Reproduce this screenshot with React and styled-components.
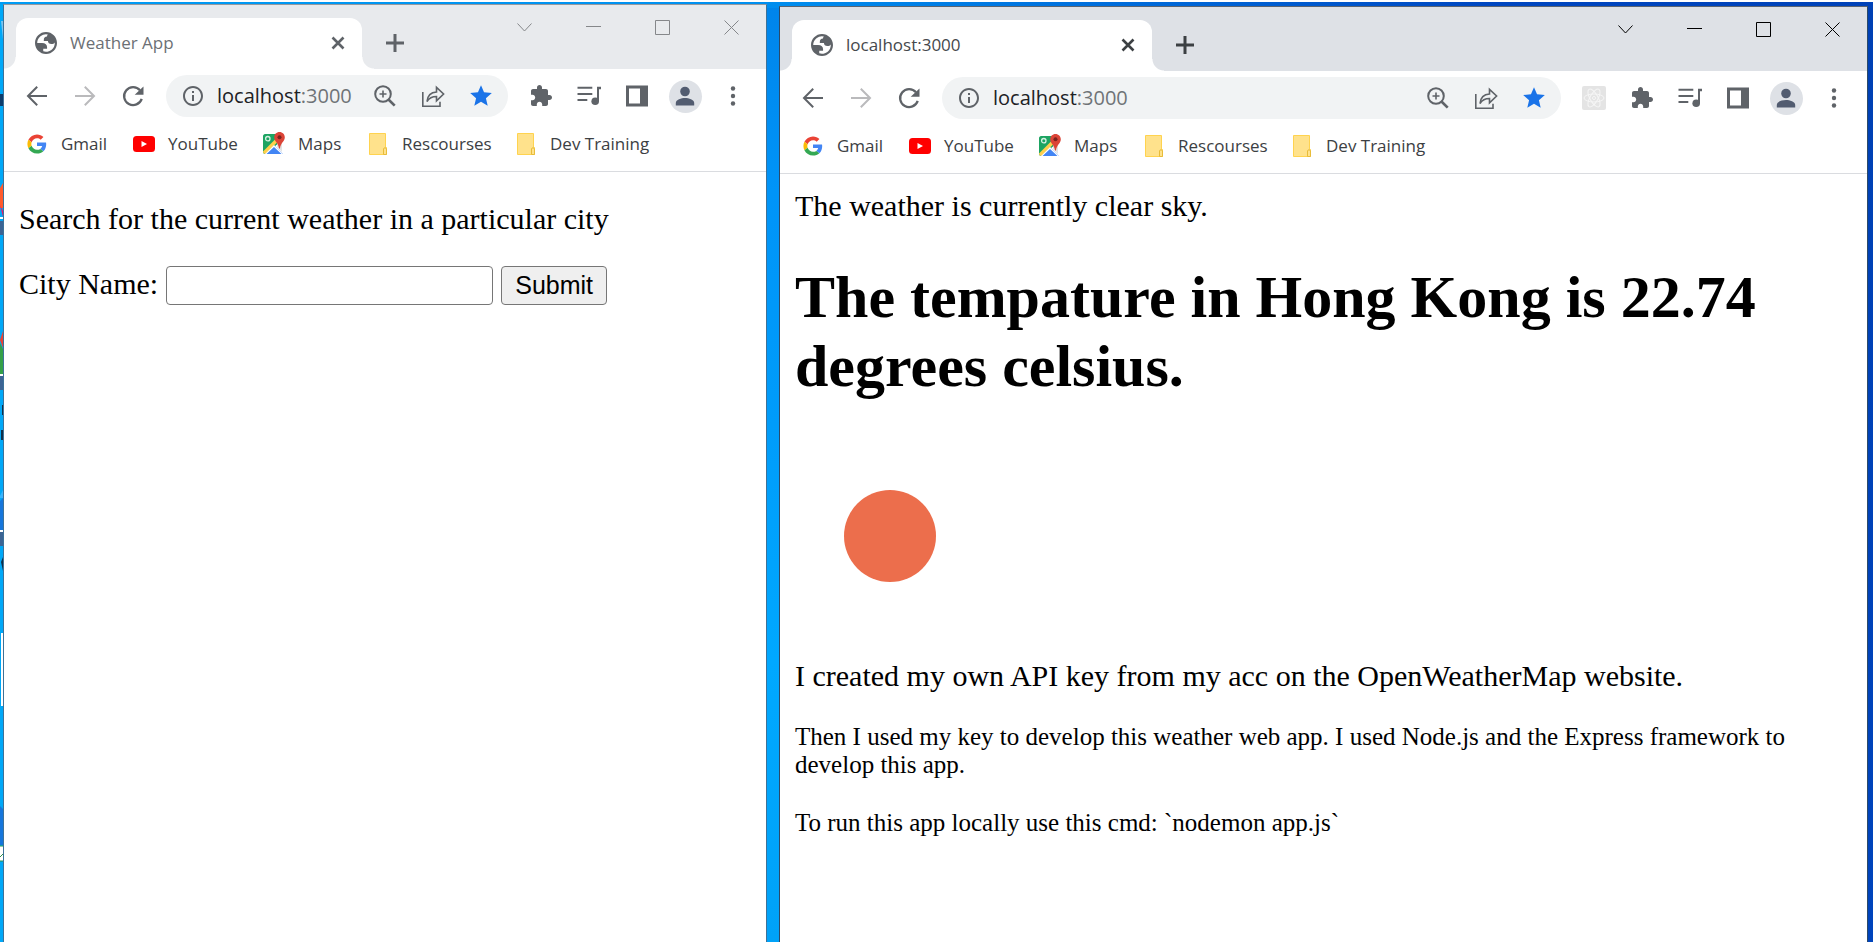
import React from "react";
import styled, { createGlobalStyle } from "styled-components";

const GlobalStyle = createGlobalStyle`
  * { box-sizing: border-box; }
  body { margin: 0; background: #fff; }
`;

const uiFont = `"Open Sans", "Noto Sans", sans-serif`;
const pageFont = `"Liberation Serif", "Times New Roman", serif`;

const Desktop = styled.div`
  display: flex;
  align-items: stretch;
  gap: 12px;
  height: calc(100vh - 2px);
  margin-top: 2px;
  padding: 2px 5px 0 0;
  overflow: hidden;
  background:
    linear-gradient(90deg, #009cf4 0%, #0090f0 40%, #0068d8 62%, #0046c0 80%, #0042b8 100%) top / 100% 6px no-repeat,
    linear-gradient(180deg, #0040b4, #0044bc) right / 40% 100% no-repeat,
    linear-gradient(180deg, #0084ea 0%, #0094f8 20%, #009cfa 45%, #00a8ff 70%, #00a2f8 100%);
`;

const DesktopEdge = styled.div`
  flex: 0 0 3px;
  margin-right: -12px;
  background: #00a8f8;
  overflow: hidden;

  svg { display: block; }
`;

const BrowserWindow = styled.section`
  display: flex;
  flex-direction: column;
  flex: ${(p) => p.$share} 1 0;
  min-width: 0;
  margin-top: ${(p) => (p.$active ? 2 : 0)}px;
  border: 1px solid ${(p) => (p.$active ? "#2c4a68" : "#3d7299")};
  border-top-color: ${(p) => (p.$active ? "#5c6470" : "#96999d")};
  border-bottom: 0;
  background: #fff;
`;

const TabStrip = styled.div`
  display: flex;
  flex: 0 0 64px;
  align-items: flex-end;
  padding-left: 12px;
  background: ${(p) => (p.$active ? "#dee1e6" : "#e8eaed")};
  --strip: ${(p) => (p.$active ? "#dee1e6" : "#e8eaed")};
`;

const Tab = styled.div`
  position: relative;
  display: flex;
  align-items: center;
  flex: 0 0 ${(p) => p.$width}px;
  height: 51px;
  padding: 0 14px 2px 19px;
  border-radius: 12px 12px 0 0;
  background: #fff;

  &::before,
  &::after {
    content: "";
    position: absolute;
    bottom: 0;
    width: 12px;
    height: 12px;
  }
  &::before {
    left: -12px;
    background: radial-gradient(circle at 0 0, var(--strip) 11px, #fff 12px);
  }
  &::after {
    right: -12px;
    background: radial-gradient(circle at 100% 0, var(--strip) 11px, #fff 12px);
  }
`;

const TabTitle = styled.span`
  flex: 1;
  margin-left: 13px;
  font: 17px/24px ${uiFont};
  color: ${(p) => (p.$active ? "#45484c" : "#6c7075")};
  white-space: nowrap;
`;

const IconButton = styled.button`
  display: flex;
  align-items: center;
  justify-content: center;
  flex: 0 0 ${(p) => p.$w || 48}px;
  height: ${(p) => p.$h || 42}px;
  padding: 0;
  border: 0;
  background: transparent;
  color: ${(p) => p.$color || "#5f6368"};

  svg { display: block; }
`;

const CaptionButtons = styled.div`
  display: flex;
  align-self: flex-start;
  margin-left: auto;
`;

const Toolbar = styled.div`
  display: flex;
  align-items: center;
  flex: 0 0 54px;
  padding: 0 9px;
`;

const Omnibox = styled.div`
  display: flex;
  align-items: center;
  flex: 1;
  min-width: 0;
  height: 42px;
  margin: 0 9px;
  padding: 0 3px;
  border-radius: 21px;
  background: #f1f3f4;
`;

const Address = styled.span`
  flex: 1;
  font: 20px/28px ${uiFont};
  color: #6f7377;
  white-space: nowrap;

  b { font-weight: 400; color: #202124; }
`;

const Avatar = styled.span`
  display: flex;
  align-items: center;
  justify-content: center;
  width: 33px;
  height: 33px;
  border-radius: 50%;
  background: #dee1e6;
  color: #525c70;
`;

const ReactBadge = styled.span`
  display: block;
  width: 24px;
  height: 24px;
  border-radius: 2px;
  background: #e4e4e4;
`;

const Bookmarks = styled.nav`
  display: flex;
  align-items: center;
  flex: 0 0 49px;
  padding: 0 0 6px 21px;
  border-bottom: 1px solid #dadce0;
`;

const Bookmark = styled.a`
  display: flex;
  align-items: center;
  flex: 0 0 ${(p) => p.$width}px;
  gap: 12px;
  font: 17px/24px ${uiFont};
  color: #3c4043;
  text-decoration: none;
  white-space: nowrap;

  svg { flex: 0 0 24px; }
`;

const Page = styled.main`
  flex: 1;
  padding: 15px;
  font: 30px/34px ${pageFont};
  color: #000;
`;

const SearchForm = styled.form`
  display: flex;
  align-items: baseline;
  gap: 8px;
`;

const Intro = styled.p`
  margin: 15px 0 30px;
`;

const CityInput = styled.input`
  flex: 0 1 327px;
  min-width: 0;
  height: 39px;
  padding: 2px 4px;
  border: 1px solid #767676;
  border-radius: 4px;
  background: #fff;
  font: 25px "Liberation Sans", Arial, sans-serif;
`;

const SubmitButton = styled.button`
  flex: 0 0 106px;
  height: 39px;
  padding: 0;
  border: 1px solid #767676;
  border-radius: 4px;
  background: #efefef;
  color: #000;
  font: 25px "Liberation Sans", Arial, sans-serif;
`;

const Line = styled.p`
  margin: 0;
`;

const Heading = styled.h1`
  margin: 40px 0;
  font-size: 60px;
  line-height: 69px;
  font-weight: 700;
`;

const WeatherIcon = styled.svg`
  display: block;
  width: 188px;
  height: 188px;
  margin-bottom: 30px;
`;

const Note = styled.p`
  margin: 30px 0;
  font-size: 25px;
  line-height: 28px;
`;

const Svg = ({ size = 24, box = "0 0 24 24", children, ...rest }) => (
  <svg width={size} height={size} viewBox={box} fill="currentColor" aria-hidden="true" {...rest}>
    {children}
  </svg>
);

const Stroked = ({ size = 24, box, width = 2, children }) => (
  <Svg size={size} box={box} fill="none" stroke="currentColor" strokeWidth={width}>
    {children}
  </Svg>
);

const GlobeIcon = () => (
  <Svg size={22} box="2 2 20 20" color="#5f6368">
    <path fillRule="evenodd" d="M12 2C6.480 2 2 6.480 2 12s4.480 10 10 10 10-4.480 10-10S17.520 2 12 2zM4 12h4.400c3.407.022 4.922 1.730 4.543 5.127H9.488v2.470a8.004 8.004 0 0 0 10.498-8.083C19.327 12.504 18.332 13 17 13c-2.137 0-3.206-.916-3.206-2.750h-3.748c-.274-2.728.683-4.092 2.870-4.092 0-.975.327-1.597.811-1.970A8.004 8.004 0 0 0 4 12z" />
  </Svg>
);
const CloseIcon = () => (
  <Stroked size={14} box="0 0 14 14" width={2.6}><path d="M1.500 1.500l11 11M12.500 1.500l-11 11" /></Stroked>
);
const PlusIcon = () => (
  <Stroked size={18} box="0 0 18 18" width={3}><path d="M9 0v18M0 9h18" /></Stroked>
);
const BackIcon = () => (
  <Stroked><path d="M22 12H3.500M12.200 2.800L3 12l9.200 9.200" /></Stroked>
);
const ForwardIcon = () => (
  <Stroked><path d="M2 12h18.500M11.800 2.800L21 12l-9.200 9.200" /></Stroked>
);
const ReloadIcon = () => (
  <Svg>
    <path d="M20.700 14.800A9 9 0 1 1 19 6.300" fill="none" stroke="currentColor" strokeWidth="2.300" />
    <path d="M22.500 2.500v8.300h-8.800z" />
  </Svg>
);
const InfoIcon = () => (
  <Svg><path d="M11 7h2v2h-2zm0 4h2v6h-2zm1-9C6.480 2 2 6.480 2 12s4.480 10 10 10 10-4.480 10-10S17.520 2 12 2zm0 18c-4.410 0-8-3.590-8-8s3.590-8 8-8 8 3.590 8 8-3.590 8-8 8z" /></Svg>
);
const ZoomIcon = () => (
  <Stroked><circle cx="10" cy="10" r="7.800" /><path d="M15.500 15.500l6.200 6.200" strokeWidth="2.600" /><path d="M10 6.500v7M6.500 10h7" strokeWidth="1.600" /></Stroked>
);
const ShareIcon = () => (
  <Stroked width={1.6}>
    <path d="M1.800 8v14.300H19v-4.500" />
    <path d="M6 17.500C6.500 12 9.500 8.300 15.500 8V3.300L22.600 10l-7.100 6.800v-4.300C11 12.500 8 14.200 6 17.500z" />
  </Stroked>
);
const StarIcon = () => (
  <Svg size={26}><path fill="#1a73e8" d="M12 17.270L18.180 21l-1.640-7.030L22 9.240l-7.190-.61L12 2 9.190 8.630 2 9.240l5.460 4.730L5.820 21z" /></Svg>
);
const PuzzleIcon = () => (
  <Svg><path d="M20.500 11H19V7c0-1.100-.9-2-2-2h-4V3.500C13 2.120 11.880 1 10.500 1S8 2.120 8 3.500V5H4c-1.100 0-1.990.9-1.990 2v3.800H3.500c1.490 0 2.700 1.210 2.700 2.700s-1.210 2.700-2.700 2.700H2V20c0 1.100.9 2 2 2h3.800v-1.500c0-1.490 1.210-2.700 2.700-2.700 1.490 0 2.700 1.210 2.700 2.700V22H17c1.100 0 2-.9 2-2v-4h1.500c1.380 0 2.500-1.120 2.500-2.500S21.880 11 20.500 11z" /></Svg>
);
const QueueIcon = () => (
  <Svg>
    <path d="M.5 2.700h14.800v2H.5zM.5 9h14.800v2H.5zM.5 15h9.800v2H.5zM20 2.700h4v2.500h-2V17h-2z" />
    <circle cx="18.200" cy="17.200" r="3.800" />
  </Svg>
);
const SidePanelIcon = () => (
  <Svg><path fillRule="evenodd" d="M1 1.500h22v21H1zM4 4.500v15h11v-15z" /></Svg>
);
const PersonIcon = () => (
  <Svg><circle cx="12" cy="7.500" r="4.800" /><path d="M2.800 21.500v-2.500c0-3.500 5.500-5 9.200-5s9.200 1.500 9.200 5v2.500z" /></Svg>
);
const DotsIcon = () => (
  <Svg><circle cx="12" cy="4.500" r="2.200" /><circle cx="12" cy="12" r="2.200" /><circle cx="12" cy="19.500" r="2.200" /></Svg>
);
const ReactIcon = () => (
  <ReactBadge>
    <Svg fill="none" stroke="#f6f6f6" strokeWidth="1">
      <ellipse cx="12" cy="12" rx="10" ry="4" />
      <ellipse cx="12" cy="12" rx="10" ry="4" transform="rotate(60 12 12)" />
      <ellipse cx="12" cy="12" rx="10" ry="4" transform="rotate(120 12 12)" />
      <circle cx="12" cy="12" r="1.500" />
    </Svg>
  </ReactBadge>
);
const CaptionIcon = ({ d }) => (
  <Svg size={15} box="0 0 15 15" fill="none" stroke="currentColor" strokeWidth="1"><path d={d} /></Svg>
);

const GoogleLogo = () => (
  <Svg box="-6 -6 60 60">
    <path fill="#ea4335" d="M24 9.500c3.540 0 6.710 1.220 9.210 3.600l6.850-6.850C35.900 2.380 30.470 0 24 0 14.620 0 6.510 5.380 2.560 13.220l7.980 6.190C12.430 13.720 17.740 9.500 24 9.500z" />
    <path fill="#4285f4" d="M46.980 24.550c0-1.570-.15-3.090-.38-4.550H24v9.020h12.940c-.58 2.960-2.260 5.480-4.780 7.180l7.730 6c4.510-4.180 7.090-10.360 7.090-17.650z" />
    <path fill="#fbbc05" d="M10.530 28.590c-.48-1.450-.76-2.990-.76-4.590s.27-3.140.76-4.590l-7.980-6.190C.92 16.460 0 20.120 0 24c0 3.880.92 7.540 2.560 10.780l7.970-6.190z" />
    <path fill="#34a853" d="M24 48c6.480 0 11.930-2.130 15.890-5.810l-7.730-6c-2.150 1.450-4.920 2.300-8.160 2.300-6.260 0-11.570-4.220-13.470-9.910l-7.980 6.190C6.510 42.620 14.620 48 24 48z" />
  </Svg>
);
const YouTubeLogo = () => (
  <Svg><rect x="1" y="4" width="22" height="16" rx="3.500" fill="#f00" /><path fill="#fff" d="M9.500 9v6l5.500-3z" /></Svg>
);
const MapsLogo = () => (
  <Svg>
    <path fill="#1da462" d="M3 2h14v9L3 22c-1 0-2-1-2-2V4c0-1 1-2 2-2z" />
    <path fill="#4285f4" d="M12 13l9 9H3z" />
    <path fill="#e3e3e3" d="M15 9h5v11l-5-5z" />
    <path fill="#ffd04b" d="M1 19.500L14 6.500l2 3L3.500 22C2 22 1 21 1 19.500z" />
    <path fill="#fff" d="M3 22l9-9 9 9h-1.500L12 15l-7.500 7z" />
    <circle cx="5.800" cy="6.700" r="2.200" fill="none" stroke="#d5f0e2" strokeWidth="1.300" />
    <path fill="#db4437" d="M17.500 0c3 0 5.300 2.300 5.300 5.200 0 4.300-4.300 5.500-4.800 11.300h-1c-.5-5.800-4.800-7-4.800-11.300C12.200 2.300 14.500 0 17.500 0z" />
    <circle cx="17.500" cy="5.300" r="2" fill="#7b231e" />
  </Svg>
);
const FolderLogo = () => (
  <Svg>
    <path fill="#ffe28c" stroke="#ffd34f" d="M3.500 1.500h16v14h1v7h-17z" />
    <path fill="#ffe28c" stroke="#e8bc3a" d="M17.500 22v-5c0-1.600 3-1.600 3 0v5.500h-3z" />
  </Svg>
);

const bookmarks = [
  { label: "Gmail", width: 107, Logo: GoogleLogo },
  { label: "YouTube", width: 130, Logo: YouTubeLogo },
  { label: "Maps", width: 104, Logo: MapsLogo },
  { label: "Rescourses", width: 148, Logo: FolderLogo },
  { label: "Dev Training", width: 140, Logo: FolderLogo },
];

const captions = [
  { label: "Search tabs", d: "M.5 3.500l7 7.500 7-7.500" },
  { label: "Minimize", d: "M0 6.500h15" },
  { label: "Maximize", d: "M.5.500h14v14H.500z" },
  { label: "Close window", d: "M.5.500l14 14M14.500.500l-14 14" },
];

function Browser({ title, tabWidth, share, active, extension, children }) {
  return (
    <BrowserWindow $share={share} $active={active} aria-label={title}>
      <TabStrip $active={active}>
        <Tab $width={tabWidth}>
          <GlobeIcon />
          <TabTitle $active={active}>{title}</TabTitle>
          <IconButton $w={20} $color={active ? "#3c4043" : "#5f6368"} aria-label="Close tab"><CloseIcon /></IconButton>
        </Tab>
        <IconButton $w={66} $h={53} $color={active ? "#3c4043" : "#5f6368"} aria-label="New tab"><PlusIcon /></IconButton>
        <CaptionButtons>
          {captions.map((c) => (
            <IconButton key={c.label} $w={69} $h={45} $color={active ? "#000" : "#85878a"} aria-label={c.label}>
              <CaptionIcon d={c.d} />
            </IconButton>
          ))}
        </CaptionButtons>
      </TabStrip>
      <Toolbar>
        <IconButton aria-label="Back"><BackIcon /></IconButton>
        <IconButton $color="#bababc" aria-label="Forward"><ForwardIcon /></IconButton>
        <IconButton aria-label="Reload"><ReloadIcon /></IconButton>
        <Omnibox>
          <IconButton aria-label="Site information"><InfoIcon /></IconButton>
          <Address><b>localhost</b>:3000</Address>
          <IconButton aria-label="Zoom"><ZoomIcon /></IconButton>
          <IconButton aria-label="Share"><ShareIcon /></IconButton>
          <IconButton aria-label="Edit bookmark"><StarIcon /></IconButton>
        </Omnibox>
        {extension && <IconButton aria-label="React Developer Tools"><ReactIcon /></IconButton>}
        <IconButton aria-label="Extensions"><PuzzleIcon /></IconButton>
        <IconButton aria-label="Media"><QueueIcon /></IconButton>
        <IconButton aria-label="Side panel"><SidePanelIcon /></IconButton>
        <IconButton aria-label="Profile"><Avatar><PersonIcon /></Avatar></IconButton>
        <IconButton aria-label="Menu"><DotsIcon /></IconButton>
      </Toolbar>
      <Bookmarks aria-label="Bookmarks">
        {bookmarks.map(({ label, width, Logo }) => (
          <Bookmark key={label} href="#" $width={width}><Logo />{label}</Bookmark>
        ))}
      </Bookmarks>
      <Page>{children}</Page>
    </BrowserWindow>
  );
}

export default function App() {
  return (
    <>
      <GlobalStyle />
      <Desktop>
        <DesktopEdge>
          <svg width="3" height="938" viewBox="0 4 3 938" aria-hidden="true">
            <path fill="#7cc4ee" d="M1 21h2v18z" />
            <path fill="#0c3c6c" d="M0 94h3v12H0z" />
            <path fill="#ff5a2c" d="M0 188l3-5v25H0z" />
            <path fill="#e8196c" d="M0 205l3 6v6z" />
            <path fill="#3c6494" d="M0 221h3v14H0zM0 376h3v14H0zM0 532h3v14H0z" />
            <path fill="#ea4335" d="M0 340l3-9v17z" />
            <path fill="#34a048" d="M0 343l3 6v25H0z" />
            <path fill="#38b4ff" d="M0 496l3-6v8H0z" />
            <path fill="#1676dc" d="M0 501l3-3v32H0zM0 806l3 3v36H0z" />
            <path fill="#fff" d="M0 217h3v2H0zM0 374h3v2H0zM0 530h3v2H0zM1 633h2v73H1zM0 846h3v15H0z" />
            <path fill="none" stroke="#2c9048" d="M0 846h3M0 857l3-3M0 861h3" />
            <path fill="#103048" d="M2 405h1v10H2zM1 430h2v10H1zM1 562l2-5v14z" />
          </svg>
        </DesktopEdge>
        <Browser title="Weather App" tabWidth={346} share={762}>
          <Intro>Search for the current weather in a particular city</Intro>
          <SearchForm onSubmit={(e) => e.preventDefault()}>
            <label htmlFor="city">City Name:</label>
            <CityInput id="city" name="cityName" type="text" />
            <SubmitButton type="submit">Submit</SubmitButton>
          </SearchForm>
        </Browser>
        <Browser title="localhost:3000" tabWidth={360} share={1087} active extension>
          <Line>The weather is currently clear sky.</Line>
          <Heading>The tempature in Hong Kong is 22.74 degrees celsius.</Heading>
          <WeatherIcon viewBox="0 0 188 188" role="img" aria-label="Clear sky">
            <circle cx="95" cy="95" r="46" fill="#ec6e4c" />
          </WeatherIcon>
          <Line>I created my own API key from my acc on the OpenWeatherMap website.</Line>
          <Note>Then I used my key to develop this weather web app. I used Node.js and the Express framework to develop this app.</Note>
          <Note>To run this app locally use this cmd: `nodemon app.js`</Note>
        </Browser>
      </Desktop>
    </>
  );
}
